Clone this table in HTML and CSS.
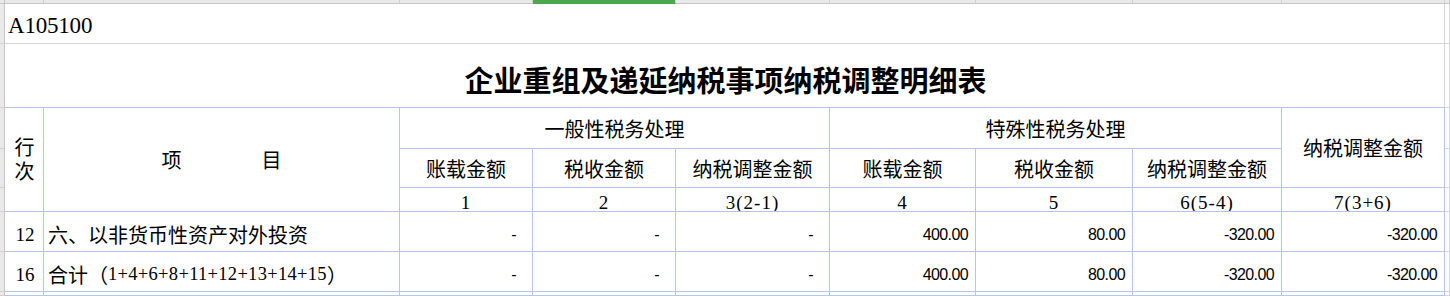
FILE: index.html
```html
<!DOCTYPE html>
<html lang="zh-CN">
<head>
<meta charset="utf-8">
<title>A105100</title>
<link rel="stylesheet" href="styles.css">
</head>
<body>
<div class="sheet">
  <!-- column header strip -->
  <div class="stub corner"></div>
  <div class="ch"></div>
  <div class="ch"></div>
  <div class="ch"></div>
  <div class="ch sel"></div>
  <div class="ch"></div>
  <div class="ch"></div>
  <div class="ch"></div>
  <div class="ch"></div>
  <div class="ch"></div>
  <div class="ch last"></div>

  <!-- row 1 -->
  <div class="stub"></div>
  <div class="g span9 code">A105100</div>
  <div class="g"></div>

  <!-- row 2 -->
  <div class="stub"></div>
  <div class="g span9 title blue-b">企业重组及递延纳税事项纳税调整明细表</div>
  <div class="g"></div>

  <!-- header row 1 -->
  <div class="stub"></div>
  <div class="c rs3 center hang">行次</div>
  <div class="c rs3 center">项　　　　目</div>
  <div class="c cs3 center">一般性税务处理</div>
  <div class="c cs3 center">特殊性税务处理</div>
  <div class="c rs2 center">纳税调整金额</div>
  <div class="g"></div>

  <!-- header row 2 -->
  <div class="stub"></div>
  <div class="c center">账载金额</div>
  <div class="c center">税收金额</div>
  <div class="c center">纳税调整金额</div>
  <div class="c center">账载金额</div>
  <div class="c center">税收金额</div>
  <div class="c center">纳税调整金额</div>
  <div class="g"></div>

  <!-- header row 3 -->
  <div class="stub"></div>
  <div class="c center low idx">1</div>
  <div class="c center low idx">2</div>
  <div class="c center low idx">3(2-1)</div>
  <div class="c center low idx">4</div>
  <div class="c center low idx">5</div>
  <div class="c center low idx">6(5-4)</div>
  <div class="c center low idx">7(3+6)</div>
  <div class="g"></div>

  <!-- data row 12 -->
  <div class="stub"></div>
  <div class="c center low rowno">12</div>
  <div class="c left low">六、以非货币性资产对外投资</div>
  <div class="c dash low">-</div>
  <div class="c dash low">-</div>
  <div class="c dash low">-</div>
  <div class="c num low">400.00</div>
  <div class="c num low">80.00</div>
  <div class="c num low">-320.00</div>
  <div class="c num low">-320.00</div>
  <div class="g"></div>

  <!-- data row 16 -->
  <div class="stub"></div>
  <div class="c center low rowno">16</div>
  <div class="c left low">合计（<span class="lat">1+4+6+8+11+12+13+14+15</span>）</div>
  <div class="c dash low">-</div>
  <div class="c dash low">-</div>
  <div class="c dash low">-</div>
  <div class="c num low">400.00</div>
  <div class="c num low">80.00</div>
  <div class="c num low">-320.00</div>
  <div class="c num low">-320.00</div>
  <div class="g"></div>

  <!-- partial row -->
  <div class="stub"></div>
  <div class="c"></div>
  <div class="c"></div>
  <div class="c"></div>
  <div class="c"></div>
  <div class="c"></div>
  <div class="c"></div>
  <div class="c"></div>
  <div class="c"></div>
  <div class="c"></div>
  <div class="g"></div>
</div>
</body>
</html>
```

FILE: styles.css
```css
:root {
  --blue: #b4c7e7;
  --grid: #d6d6d6;
  --head: #e9e9e9;
  --headline: #c6c6c6;
}

html, body {
  margin: 0;
  padding: 0;
  background: #ffffff;
}

body {
  width: 1450px;
  height: 296px;
  overflow: hidden;
  font-family: "Liberation Serif", "Noto Sans CJK SC", serif;
  font-size: 20px;
  color: #000;
}

.sheet {
  display: grid;
  grid-template-columns: 5px 39px 356px 133px 143px 154px 146px 157px 149px 163px 5px;
  grid-template-rows: 4px 40px 64px 41px 39px 24px 40px 40px 4px;
  height: 296px;
  overflow: hidden;
}

.sheet > div {
  box-sizing: border-box;
  min-width: 0;
  overflow: hidden;
  white-space: nowrap;
}

/* spreadsheet chrome */
.stub {
  grid-column: 1;
  background: var(--head);
  border-right: 1px solid var(--headline);
  border-bottom: 1px solid #d2d2d2;
}

.corner {
  border-bottom: 1px solid var(--headline);
}

.ch {
  background: var(--head);
  border-right: 1px solid #cfcfcf;
  border-bottom: 1px solid var(--headline);
}

.ch.sel {
  background: #4ca84c;
  border-bottom-color: #4ca84c;
}

/* plain gridline cells */
.g {
  border-right: 1px solid var(--grid);
  border-bottom: 1px solid var(--grid);
}

.blue-b {
  border-bottom-color: var(--blue);
}

/* table cells */
.c {
  border-right: 1px solid var(--blue);
  border-bottom: 1px solid var(--blue);
  display: flex;
  align-items: center;
}

.span9 { grid-column: span 9; }
.cs3 { grid-column: span 3; }
.rs3 { grid-row: span 3; }
.rs2 { grid-row: span 2; }

.code {
  display: flex;
  align-items: center;
  padding: 4px 0 0 3px;
  font-family: "Liberation Serif", serif;
  font-size: 23px;
  letter-spacing: -0.2px;
}

.title {
  display: flex;
  align-items: center;
  justify-content: center;
  padding-top: 6px;
  padding-left: 2px;
  font-family: "Noto Sans CJK SC", sans-serif;
  font-weight: 700;
  font-size: 29px;
}

.center {
  justify-content: center;
  text-align: center;
}

.left {
  justify-content: flex-start;
  padding-left: 4px;
}

.low {
  padding-top: 6px;
}

.hang {
  white-space: normal !important;
  line-height: 24px;
  padding: 0 0 0 1px;
  word-break: break-all;
}

.rowno {
  font-size: 19px;
  padding-left: 2px;
}

.lat {
  font-size: 18.5px;
  letter-spacing: 0.3px;
}

.idx {
  letter-spacing: 1px;
  font-size: 19px;
}

.num, .dash {
  justify-content: flex-end;
  font-family: "Liberation Sans", sans-serif;
  font-size: 16px;
  letter-spacing: -0.6px;
}

.num {
  padding-right: 7px;
}

.dash {
  padding-right: 16px;
}
```
